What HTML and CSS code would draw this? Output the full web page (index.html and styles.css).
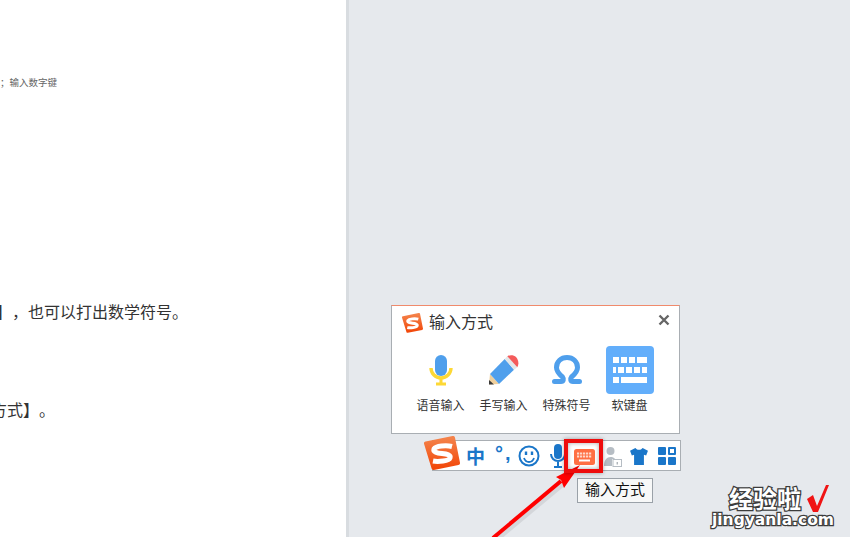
FILE: index.html
```html
<!DOCTYPE html>
<html lang="zh-CN">
<head>
    <meta charset="UTF-8">
    <meta name="viewport" content="width=device-width, initial-scale=1.0">
    <title>输入方式</title>
    <link rel="stylesheet" href="styles.css">
</head>
<body>
    <svg class="defs" width="0" height="0">
        <defs>
            <linearGradient id="sogouFill" x1="0" y1="0" x2="0" y2="1">
                <stop offset="0" stop-color="#f4824a"/>
                <stop offset="1" stop-color="#f2480a"/>
            </linearGradient>
        </defs>
        <symbol id="sogou" viewBox="0 0 36 36">
            <path d="M2 7.500L29 2l5 25L9.500 32z" fill="url(#sogouFill)" stroke="url(#sogouFill)" stroke-width="4" stroke-linejoin="round"/>
            <path d="M28 10.500C22 9 12 10 10 13c-1 3 3 4 8 4.500s9 1.500 8 4.500c-1 3-12 4-17 3" fill="none" stroke="#fff" stroke-width="5"/>
        </symbol>
    </svg>

    <div class="doc">
        <p class="doc-small">；输入数字键</p>
        <p class="doc-line doc-line-first">】，也可以打出数学符号。</p>
        <p class="doc-line doc-line-second">方式】。</p>
    </div>

    <div class="desk">
        <!-- input method popup -->
        <div class="popup">
            <div class="popup-head">
                <svg class="logo-small"><use href="#sogou"/></svg>
                <span class="popup-title">输入方式</span>
                <svg class="popup-close" viewBox="0 0 12 12"><path d="M1.500 1.500l9 9M10.500 1.500l-9 9" stroke="#666" stroke-width="2.400"/></svg>
            </div>
            <div class="popup-items">
                <div class="popup-item">
                    <div class="item-icon">
                        <svg width="24" height="32" viewBox="0 0 24 32">
                            <path d="M2 14a10 10 0 0 0 20 0" fill="none" stroke="#fdd835" stroke-width="3.400"/>
                            <path d="M12 24v5M7 30h10" stroke="#fdd835" stroke-width="3"/>
                            <rect x="6" y="1" width="12" height="21" rx="6" fill="#4f9fec"/>
                        </svg>
                    </div>
                    <span>语音输入</span>
                </div>
                <div class="popup-item">
                    <div class="item-icon">
                        <svg width="30" height="30" viewBox="0 0 30 30">
                            <path d="M1 19L0 29.500 10 29z" fill="#efcf9c"/>
                            <path d="M0 29.500V25l5 4.500z" fill="#3a3a3a"/>
                            <path d="M1 19L15.700 4 25 14.700 10 29z" fill="#4f9fec"/>
                            <path d="M15.700 4l2.600-2.700 10 11-3.300 2.400z" fill="#e3e6e8"/>
                            <path d="M18.300 1.300C21-.5 25 0 27 2s3.500 6.500 1.300 10.300z" fill="#f45b5b"/>
                        </svg>
                    </div>
                    <span>手写输入</span>
                </div>
                <div class="popup-item">
                    <div class="item-icon">
                        <svg width="32" height="32" viewBox="0 0 32 32">
                            <path d="M3.500 27.500H10c2.500 0 3-2.500 1.500-4.500C8 20 5.500 17.500 5.500 13.500 5.500 7.500 10 3.500 16 3.500s10.500 4 10.500 10c0 4-2.500 6.500-6 9.500-1.500 2-1 4.500 1.500 4.500h6.500" fill="none" stroke="#4f9fec" stroke-width="5" stroke-linecap="round" stroke-linejoin="round"/>
                        </svg>
                    </div>
                    <span>特殊符号</span>
                </div>
                <div class="popup-item">
                    <div class="item-tile">
                        <svg width="34" height="26" viewBox="0 0 34 26" fill="#fff">
                            <rect x="0" y="0" width="6" height="6"/><rect x="8" y="0" width="6" height="6"/><rect x="16" y="0" width="6" height="6"/><rect x="24" y="0" width="10" height="6"/>
                            <rect x="0" y="10" width="3" height="6"/><rect x="5" y="10" width="6" height="6"/><rect x="13" y="10" width="6" height="6"/><rect x="21" y="10" width="6" height="6"/><rect x="29" y="10" width="5" height="6"/>
                            <rect x="0" y="20" width="6" height="6"/><rect x="8" y="20" width="26" height="6"/>
                        </svg>
                    </div>
                    <span>软键盘</span>
                </div>
            </div>
        </div>

        <!-- toolbar under the popup -->
        <div class="toolbar">
            <svg class="logo-big"><use href="#sogou"/></svg>
            <span class="tool-zh">中</span>
            <span class="tool-punct">°,</span>
            <svg class="tool-icon tool-smile" viewBox="0 0 22 22" fill="none" stroke="#1a76c9" stroke-width="2">
                <circle cx="11" cy="11" r="9.500"/>
                <path d="M6 13c1 3 3 4 5 4s4-1 5-4" stroke-width="1.800"/>
                <path d="M8 6.500v3.500M14 6.500v3.500" stroke-width="2.400"/>
            </svg>
            <svg class="tool-icon tool-mic" viewBox="0 0 16 24" fill="none" stroke="#1a76c9">
                <rect x="4" y="0" width="8" height="15" rx="4" fill="#1a76c9" stroke="none"/>
                <path d="M1 10a7 7 0 0 0 14 0M8 17v5M4 23h8" stroke-width="2"/>
            </svg>
            <div class="tool-key">
                <svg width="21" height="16" viewBox="0 0 21 16">
                    <rect width="21" height="16" rx="2.500" fill="#ff6f43"/>
                    <path d="M3 4.500h15M3 7.500h15" stroke="#ffd9cc" stroke-width="2" stroke-dasharray="2.200 .8"/>
                    <path d="M5 11.500h11" stroke="#fff" stroke-width="2"/>
                </svg>
            </div>
            <svg class="tool-icon tool-person" viewBox="0 0 18 22">
                <circle cx="6.500" cy="5" r="4" fill="#b6bdc4"/>
                <path d="M0 20c0-6 3-9 6.500-9 2 0 3.500.5 4.500 2H8v7z" fill="#b6bdc4"/>
                <rect x="9" y="13.500" width="8.500" height="7" fill="#fff" stroke="#b6bdc4"/>
                <path d="M13.200 16v2.500" stroke="#8b949c"/>
            </svg>
            <svg class="tool-icon tool-shirt" viewBox="0 0 20 19">
                <path d="M6 0c1 1.500 2.500 2 4 2s3-.5 4-2l6 3-2 5.500-2.500-1V19h-11V7.500L2 8.500 0 3z" fill="#1a76c9"/>
            </svg>
            <svg class="tool-icon tool-grid" viewBox="0 0 18 18">
                <rect width="8" height="8" rx="1" fill="#1a76c9"/>
                <rect x="10" width="8" height="8" rx="1" fill="#1a76c9"/>
                <rect x="12" y="2" width="4" height="4" fill="#fff"/>
                <rect y="10" width="8" height="8" rx="1" fill="#1a76c9"/>
                <rect x="10" y="10" width="8" height="8" rx="1" fill="#1a76c9"/>
            </svg>
        </div>

        <div class="tooltip">输入方式</div>
    </div>

    <!-- red annotation drawn on the screenshot -->
    <svg class="arrow" width="850" height="537" viewBox="0 0 850 537">
        <path d="M496 540L563 484" stroke="#000" stroke-opacity=".08" stroke-width="5" fill="none"/>
        <path d="M493 538L561 481" stroke="#f00" stroke-width="4" fill="none"/>
        <path d="M580 465L556 477 561 480 564 488z" fill="#f00"/>
    </svg>
    <div class="red-box"></div>

    <div class="watermark">
        <div class="mark-top">
            <span class="mark-cn">经验啦</span>
            <svg width="24" height="28" viewBox="0 0 24 28"><path d="M1 15l6-4 4 11 9-21h3L12 28H7z" fill="#f01414"/></svg>
        </div>
        <div class="mark-en">jingyanla.com</div>
    </div>
</body>
</html>
```

FILE: styles.css
```css
* {
    box-sizing: border-box;
}
body {
    margin: 0;
    width: 850px;
    height: 537px;
    overflow: hidden;
    display: flex;
    position: relative;
    font-family: "Liberation Sans", "Noto Sans CJK SC", sans-serif;
    text-spacing-trim: space-all;
    background: #e6e9ed;
}
.defs {
    position: absolute;
}

/* Document page on the left */
.doc {
    width: 349px;
    height: 537px;
    flex: none;
    background: #fff;
    border-right: 3px solid #d8dce0;
    overflow: hidden;
    color: #333;
}
.doc p {
    margin: 0;
    white-space: nowrap;
}
.doc .doc-small {
    padding-top: 77px;
    font-size: 9.500px;
    line-height: 12px;
    color: #666;
}
.doc-line {
    font-size: 16px;
    line-height: 22px;
}
.doc .doc-line-first {
    margin-top: 213px;
    margin-left: -4px;
}
.doc .doc-line-second {
    margin-top: 76px;
    margin-left: -9px;
}

.desk {
    flex: 1;
    position: relative;
}

/* Popup window */
.popup {
    position: absolute;
    left: 42px;
    top: 305px;
    width: 289px;
    height: 129px;
    background: #fff;
    border: 1px solid #a9aeb3;
    border-top-color: #f08a6c;
    padding: 7px 0 0 10px;
}
.popup-head {
    display: flex;
    align-items: center;
    height: 20px;
}
.logo-small {
    width: 21px;
    height: 21px;
}
.popup-title {
    margin-left: 6px;
    font-size: 16px;
    line-height: 20px;
    color: #333;
}
.popup-close {
    width: 12px;
    height: 12px;
    margin-left: auto;
    margin-right: 9px;
    margin-top: -7px;
}
.popup-items {
    display: flex;
    margin-top: 13px;
    margin-left: 7px;
}
.popup-item {
    width: 63px;
    display: flex;
    flex-direction: column;
    align-items: center;
    font-size: 12px;
    color: #333;
    line-height: 16px;
}
.item-icon {
    height: 48px;
    margin-bottom: 4px;
    display: flex;
    align-items: center;
    justify-content: center;
}
.item-tile {
    width: 48px;
    height: 48px;
    margin-bottom: 4px;
    background: #62aefb;
    border-radius: 4px;
    display: flex;
    align-items: center;
    justify-content: center;
}

/* Toolbar */
.toolbar {
    position: absolute;
    left: 83px;
    top: 440px;
    width: 249px;
    height: 31px;
    background: #fff;
    border: 1px solid #a9aeb3;
    display: flex;
    align-items: center;
}
.logo-big {
    width: 36px;
    height: 36px;
    margin-left: -9px;
    margin-top: -3px;
    flex: none;
}
.tool-zh {
    margin-left: 6px;
    font-size: 19px;
    font-weight: bold;
    color: #1a76c9;
}
.tool-punct {
    margin-left: 10px;
    margin-top: -5px;
    width: 17px;
    font-size: 20px;
    font-weight: bold;
    letter-spacing: 2px;
    color: #1a76c9;
    white-space: nowrap;
}
.tool-icon {
    flex: none;
}
.tool-smile {
    width: 22px;
    height: 22px;
    margin-left: 6px;
}
.tool-mic {
    width: 16px;
    height: 24px;
    margin-left: 10px;
}
.tool-key {
    margin-left: 8px;
    margin-top: 2px;
    width: 21px;
    height: 16px;
    flex: none;
    display: flex;
}
.tool-person {
    width: 18px;
    height: 22px;
    margin-left: 9px;
    margin-top: 2px;
}
.tool-shirt {
    width: 18px;
    height: 17px;
    margin-left: 8px;
    margin-top: 2px;
}
.tool-grid {
    width: 18px;
    height: 18px;
    margin-left: 10px;
}
.tooltip {
    position: absolute;
    left: 228px;
    top: 478px;
    width: 76px;
    height: 25px;
    background: #f7f8f8;
    border: 1px solid #9aa1a8;
    font-size: 15px;
    line-height: 22px;
    text-align: center;
    color: #111;
}

/* Annotation */
.arrow {
    position: absolute;
    left: 0;
    top: 0;
}
.red-box {
    position: absolute;
    left: 564px;
    top: 439px;
    width: 39px;
    height: 34px;
    border: 4px solid #ee0c0c;
    box-shadow: 0 0 4px rgba(0, 0, 0, .35), inset 0 0 4px rgba(0, 0, 0, .35);
}

/* Watermark */
.watermark {
    position: absolute;
    left: 708px;
    top: 484px;
    width: 130px;
}
.mark-top {
    display: flex;
    align-items: center;
    justify-content: flex-end;
    gap: 5px;
    height: 27px;
    padding-right: 8px;
}
.mark-cn,
.mark-en {
    font-family: "Noto Sans CJK SC", "Liberation Sans", sans-serif;
    font-weight: bold;
    color: #fff;
    -webkit-text-stroke: 2.500px #3c3c3c;
    paint-order: stroke fill;
    white-space: nowrap;
}
.mark-cn {
    font-size: 24px;
    line-height: 27px;
}
.mark-en {
    font-family: "DejaVu Sans", sans-serif;
    font-size: 15.500px;
    line-height: 19px;
    text-align: center;
}
```
